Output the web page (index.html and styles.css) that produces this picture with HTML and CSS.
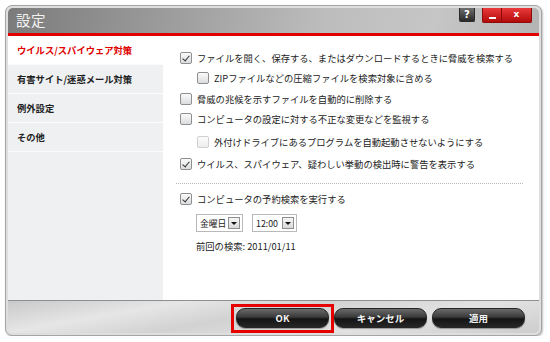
FILE: index.html
```html
<!DOCTYPE html>
<html lang="ja">
<head>
<meta charset="utf-8">
<title>設定</title>
<link rel="stylesheet" href="styles.css">
</head>
<body>
<div class="window">
  <div class="titlebar">
    <span class="title">設定</span>
    <div class="tbtns">
      <span class="tb help">?</span>
      <div class="tb-red">
        <span class="tb min"><i></i></span>
        <span class="tb close">x</span>
      </div>
    </div>
  </div>
  <div class="redline"></div>
  <div class="main">
    <nav class="sidebar">
      <div class="nav-item active">ウイルス/スパイウェア対策</div>
      <div class="nav-item">有害サイト/迷惑メール対策</div>
      <div class="nav-item">例外設定</div>
      <div class="nav-item">その他</div>
    </nav>
    <section class="content">
      <div class="row"><span class="cb checked"></span><span>ファイルを開く、保存する、またはダウンロードするときに脅威を検索する</span></div>
      <div class="row indent"><span class="cb"></span><span>ZIPファイルなどの圧縮ファイルを検索対象に含める</span></div>
      <div class="row g1"><span class="cb"></span><span>脅威の兆候を示すファイルを自動的に削除する</span></div>
      <div class="row"><span class="cb"></span><span>コンピュータの設定に対する不正な変更などを監視する</span></div>
      <div class="row indent g3"><span class="cb disabled"></span><span>外付けドライブにあるプログラムを自動起動させないようにする</span></div>
      <div class="row g2"><span class="cb checked"></span><span>ウイルス、スパイウェア、疑わしい挙動の検出時に警告を表示する</span></div>
      <div class="divider"></div>
      <div class="row"><span class="cb checked"></span><span>コンピュータの予約検索を実行する</span></div>
      <div class="selects">
        <div class="select sel-day"><span class="sel-val">金曜日</span><span class="sel-btn"></span></div>
        <div class="select sel-time"><span class="sel-val">12:00</span><span class="sel-btn"></span></div>
      </div>
      <div class="last-scan">前回の検索: 2011/01/11</div>
    </section>
  </div>
  <div class="footer">
    <button class="btn ok">OK<span class="highlight"></span></button>
    <button class="btn">キャンセル</button>
    <button class="btn">適用</button>
  </div>
</div>
</body>
</html>
```
FILE: styles.css
```css
* { box-sizing: border-box; }
html, body { margin: 0; padding: 0; background: #ffffff; }
body {
  font-family: "Noto Sans CJK JP", "Noto Sans", sans-serif;
  font-size: 9.3px;
  color: #222;
}
.window {
  margin: 5px 0 0 5px;
  width: 537px;
  height: 331px;
  border: 1px solid #a4a4a4;
  border-radius: 7px;
  padding: 2px;
  background: #dedede;
  box-shadow: 1px 1px 2px rgba(0,0,0,0.25);
  display: flex;
  flex-direction: column;
}
.titlebar {
  height: 25px;
  flex: none;
  display: flex;
  justify-content: space-between;
  align-items: flex-start;
  border-radius: 5px 5px 0 0;
  background: linear-gradient(100deg, #7b7b7b 0%, #9c9c9c 30%, #bdbdbd 60%, #c6c6c6 80%, #b4b4b4 100%);
  padding: 0 7px 0 8px;
}
.title {
  color: #f2f2f2;
  font-size: 14.5px;
  line-height: 24px;
  letter-spacing: 0.5px;
}
.tbtns { display: flex; align-items: flex-start; gap: 7px; }
.tb {
  display: flex;
  align-items: center;
  justify-content: center;
  height: 14px;
  color: #fff;
  font-weight: bold;
  font-family: "DejaVu Sans", sans-serif;
}
.help {
  width: 16px;
  font-size: 10px;
  background: linear-gradient(#6e6e6e, #2a2a2a);
  border: 1px solid #2b2b2b;
  border-top: none;
  border-radius: 0 0 2px 2px;
}
.tb-red {
  display: flex;
  background: linear-gradient(#ea3b3b, #b30b0b);
  border: 1px solid #8c0a0a;
  border-top: none;
  border-radius: 0 0 2px 2px;
}
.min { width: 19px; border-right: 1px solid #8c0a0a; align-items: flex-end; padding-bottom: 3px; }
.min i { display: block; width: 7px; height: 2px; background: #fff; }
.close { width: 29px; font-size: 9px; padding-bottom: 2px; }
.redline { height: 3px; flex: none; background: #e10000; }
.main { flex: 1; display: flex; background: #fff; }
.sidebar {
  width: 155px;
  flex: none;
  background: #eef0f2;
}
.nav-item {
  height: 29px;
  display: flex;
  align-items: center;
  padding-left: 9px;
  font-weight: bold;
  color: #1e1e1e;
  border-bottom: 1px solid #fafbfc;
}
.nav-item.active { background: #fff; color: #e00000; }
.content {
  flex: 1;
  padding: 12px 16px 0 17px;
}
.row {
  height: 20px;
  display: flex;
  align-items: center;
  gap: 5px;
}
.row.indent { padding-left: 17px; }
.row.g1 { margin-top: 1px; }
.row.g2 { margin-top: 2px; }
.row.g3 { margin-top: 3px; }
.cb {
  width: 12px;
  height: 12px;
  flex: none;
  border: 1px solid #8d8f91;
  border-radius: 2px;
  background: linear-gradient(#fafafa, #dcdddf);
  position: relative;
}
.cb.checked::after {
  content: "";
  position: absolute;
  left: 3px;
  top: 1px;
  width: 3px;
  height: 6px;
  border-right: 1.6px solid #333;
  border-bottom: 1.6px solid #333;
  transform: rotate(40deg);
}
.cb.disabled { border-color: #cfd0d1; background: linear-gradient(#fbfbfb, #eeeeee); }
.divider {
  margin: 9px 0 5px -4px;
  border-top: 1px dotted #b8b8b8;
}
.selects {
  margin-top: 5px;
  height: 18px;
  display: flex;
  gap: 9px;
  padding-left: 16px;
}
.select {
  display: flex;
  align-items: center;
  justify-content: space-between;
  height: 18px;
  border: 1px solid #b9b9b9;
  background: #fff;
  padding: 0 2px 0 3px;
  font-size: 8.8px;
  white-space: nowrap;
}
.sel-day { width: 47px; }
.sel-time { width: 45px; }
.sel-btn {
  width: 12px;
  height: 12px;
  flex: none;
  border: 1px solid #8e8e8e;
  background: linear-gradient(#f7f7f7, #d9d9d9);
  position: relative;
}
.sel-btn::after {
  content: "";
  position: absolute;
  left: 2px;
  top: 3.5px;
  border-left: 3px solid transparent;
  border-right: 3px solid transparent;
  border-top: 3px solid #111;
}
.last-scan {
  margin-top: 6px;
  padding-left: 16px;
  height: 16px;
  line-height: 16px;
}
.footer {
  height: 33px;
  flex: none;
  display: flex;
  justify-content: flex-end;
  align-items: center;
  gap: 5px;
  padding: 1px 14px 0 0;
  border-top: 1px solid #8f8f8f;
  border-radius: 0 0 5px 5px;
  background: linear-gradient(170deg, #c9c9c9 0%, #e6e6e6 25%, #d2d2d2 45%, #e2e2e2 70%, #cdcdcd 100%);
}
.btn {
  position: relative;
  width: 93px;
  height: 20px;
  border: 1px solid #262626;
  border-radius: 9px;
  background: linear-gradient(#6a6a6a 0%, #3a3a3a 45%, #141414 55%, #262626 100%);
  color: #f4f4f4;
  font-family: "Noto Sans CJK JP", "Noto Sans", sans-serif;
  font-size: 9.5px;
  font-weight: bold;
  padding: 0;
  box-shadow: 0 1px 1px rgba(0,0,0,0.3);
}
.highlight {
  position: absolute;
  left: -6px;
  right: -6px;
  top: -5px;
  bottom: -6px;
  border: 3px solid #e60000;
}
```
